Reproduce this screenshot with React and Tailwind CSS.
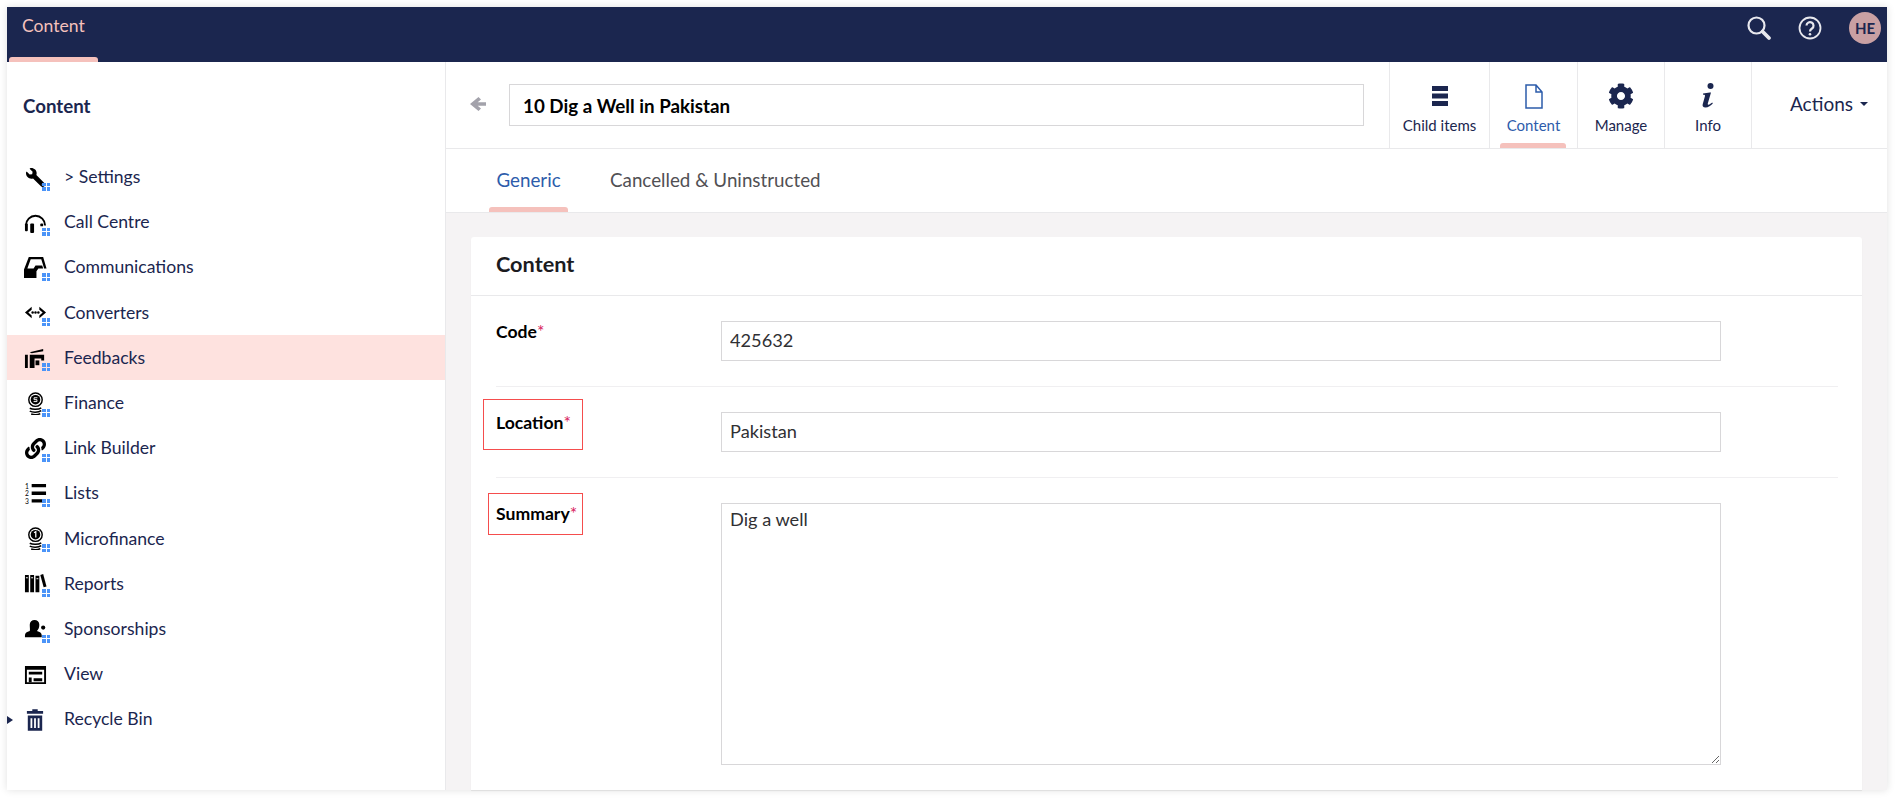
import React from "react";
import { FaCog, FaLink, FaWrench } from "react-icons/fa";

const I = ({ children, vb = "0 0 24 24", cls = "w-[23px] h-[23px]" }) => (
  <svg viewBox={vb} className={cls} fill="currentColor">{children}</svg>
);

const coin = (
  <>
    <circle cx="12" cy="8" r="7" fill="none" stroke="currentColor" strokeWidth="1.500" />
    <circle cx="12" cy="8" r="5" />
    <path d="M6 17c3 1.500 9 1.500 12-.500M6 20c3 1.500 9 1.500 12-.500M7.500 23c3 .8 7 .8 9.500-.500" fill="none" stroke="currentColor" strokeWidth="1.600" />
  </>
);

const icons = {
  wrench: <FaWrench className="w-[19px] h-[19px] -scale-x-100" />,
  head: (
    <I>
      <path d="M2 15a10 10 0 0 1 20 0" fill="none" stroke="currentColor" strokeWidth="2" />
      <rect x="1" y="13" width="3" height="8" rx="1" />
      <rect x="6.500" y="13" width="4" height="10" rx="1" />
      <rect x="17" y="13" width="3" height="3" rx="1" />
    </I>
  ),
  comm: (
    <I>
      <path fillRule="evenodd" d="M5 1h15l3.500 12h-2.500L18 3.500H7L3.500 13H10l2-3h7l1 3h-5l-2 3v7H0v-9z" />
    </I>
  ),
  conv: (
    <I>
      <path d="M8 6 1 12l7 6v-3L4.500 12 8 9zM16 6l7 6-7 6v-3l3.500-3L16 9z" />
      <circle cx="9" cy="12" r="1.300" />
      <circle cx="12" cy="12" r="1.300" />
      <circle cx="15" cy="12" r="1.300" />
    </I>
  ),
  feed: (
    <I>
      <path d="M1 8h3v14H1zM6 8h15v6h-3v-2h-7v10H6z" />
      <path d="M6 5.500 20 2v2.500L8 6.500z" />
      <rect x="12" y="14" width="4" height="5" />
    </I>
  ),
  fin: (
    <I>
      {coin}
      <path d="M14 6h-3.500v2h3v2H10" fill="none" stroke="#fff" strokeWidth="1" />
    </I>
  ),
  micro: (
    <I>
      {coin}
      <path d="M10.500 6l1.800-1.200V11" fill="none" stroke="#fff" strokeWidth="1.300" />
    </I>
  ),
  link: <FaLink className="w-[21px] h-[21px]" />,
  lists: (
    <svg viewBox="0 0 24 24" className="w-[23px] h-[23px]" fill="currentColor">
      <path d="M8 2h15v3.500H8zM8 10h15v3.500H8zM8 18h15l-3 3.500H8z" />
      <text x="1" y="7" fontSize="7" fontFamily="Lato">1</text>
      <text x="1" y="15" fontSize="7" fontFamily="Lato">2</text>
      <text x="1" y="23" fontSize="7" fontFamily="Lato">3</text>
    </svg>
  ),
  rep: (
    <I>
      <path d="M1 3h4v18H1zM6.500 3h4v18h-4zM12 4h4v17h-4z" />
      <path d="M17 3l3-1 3.500 13-3 1z" />
      <path d="M2 6h2M7.500 6h2M13 7h2" stroke="#fff" strokeWidth="1" />
    </I>
  ),
  spons: (
    <I>
      <path d="M6 7a5 5 0 0 1 10 0c0 3-1 5-2.500 6.500 3 .8 5 2 5 4.500v2H1v-2c0-2.500 2-3.700 5-4.500C6.500 12 6 10 6 7z" />
      <circle cx="20" cy="10" r="2.200" />
    </I>
  ),
  view: (
    <I>
      <path fillRule="evenodd" d="M1 3h22v19H1zM3 7v13h18V7z" />
      <path d="M5 9h14v3H5zM5 15h3v5H5zM10 16h9v3H10z" />
    </I>
  ),
  trash: (
    <svg viewBox="0 0 20 24" className="w-[18px] h-[22px] text-[#1b264f]" fill="currentColor">
      <path d="M7 0h6v2h6v3H1V2h6z" />
      <path fillRule="evenodd" d="M2 7h16v17H2zM5 10v11h2V10zM9 10v11h2V10zM13 10v11h2V10z" />
    </svg>
  ),
};

const items = [
  ["> Settings", "wrench", true],
  ["Call Centre", "head", true],
  ["Communications", "comm", true],
  ["Converters", "conv", true],
  ["Feedbacks", "feed", true, true],
  ["Finance", "fin", true],
  ["Link Builder", "link", true],
  ["Lists", "lists", true],
  ["Microfinance", "micro", true],
  ["Reports", "rep", true],
  ["Sponsorships", "spons", true],
  ["View", "view", false],
  ["Recycle Bin", "trash", false],
];

const Dots = () => (
  <span className="absolute left-[35px] top-[28px] grid grid-cols-[3.500px_3.500px] gap-px">
    <i className="h-[3.500px] bg-[#4b94f8]" />
    <i className="h-[3.500px] bg-[#4b94f8]" />
    <i className="h-[3.500px] bg-[#4b94f8]" />
    <i className="h-[3.500px] bg-[#4b94f8]" />
  </span>
);

const Row = ({ label, icon, dots, active, last }) => (
  <div className={`relative flex items-center h-[45.2px] pl-[16px] text-[17.6px] text-[#1b264f] ${active ? "bg-[#fee2df] shadow-[inset_0_-1px_0_#fff]" : ""}`}>
    <span className="w-[24px] h-[24px] flex items-center justify-center text-black">{icons[icon]}</span>
    {dots && <Dots />}
    {last && <span className="absolute left-0 top-[19px] w-0 h-0 border-y-[4px] border-y-transparent border-l-[6px] border-l-[#1b264f]" />}
    <span className="ml-[17px]">{label}</span>
  </div>
);

const TopTab = ({ icon, label, active, w }) => (
  <div className={`relative shrink-0 flex flex-col items-center border-l border-[#e9e9eb] h-full ${w} ${active ? "text-[#2d5cab]" : "text-[#1b264f]"}`}>
    <span className="h-[28px] mt-[20px] flex items-center justify-center">{icon}</span>
    <span className="text-[15px] leading-[20px] mt-[5px]">{label}</span>
    {active && <span className="absolute left-[10px] bottom-0 w-[66px] h-[5px] rounded-t-[3px] bg-[#f5c1bc]" />}
  </div>
);

const Field = ({ label, children, border, box }) => (
  <div className={`relative flex ${border ? "border-b border-[#f0eff1]" : ""}`}>
    <div className="w-[225px] shrink-0 -mt-[1px] text-[17.6px] leading-[24px] font-bold text-black">
      {label}<span className="text-[#d9265f] font-normal">*</span>
    </div>
    {children}
    {box}
  </div>
);

const inputCls = "block w-[1000px] h-[40px] border border-[#d8d7d9] px-[8px] pb-[3px] text-[18.2px] text-[#303033] outline-none";

export default function App() {
  return (
    <div className="w-[1895px] h-[799px] overflow-hidden bg-white p-[7px] pb-[9px] font-['Lato','Liberation_Sans',sans-serif]">
      <div className="relative w-[1880px] h-[783px] flex flex-col bg-[#f5f3f4] shadow-[0_0_8px_rgba(0,0,0,0.12)]">
        <header className="relative h-[55px] shrink-0 bg-[#1b264f] flex items-start justify-between">
          <span className="ml-[15px] mt-[7px] text-[17.6px] leading-[24px] text-[#f5c1bc]">Content</span>
          <span className="absolute left-[2px] bottom-0 w-[89px] h-[5px] rounded-t-[3px] bg-[#f5c1bc]" />
          <div className="flex items-center h-[42px]">
            <svg viewBox="0 0 26 26" className="w-[26px] h-[26px] text-[#e8e8ee]" fill="none" stroke="currentColor">
              <circle cx="10.500" cy="10.500" r="8" strokeWidth="2.200" />
              <path d="M16.500 16.500 23 23" strokeWidth="3.800" strokeLinecap="round" />
            </svg>
            <svg viewBox="0 0 24 24" className="w-[24px] h-[24px] ml-[26px] text-[#e8e8ee]" fill="none" stroke="currentColor" strokeWidth="1.800">
              <circle cx="12" cy="12" r="10.500" />
              <path d="M8.500 9.500a3.500 3.500 0 1 1 5.500 3c-1.300.9-2 1.500-2 3" strokeWidth="2.200" />
              <circle cx="12" cy="18.200" r="1.300" fill="currentColor" stroke="none" />
            </svg>
            <span className="ml-[27px] mr-[6px] w-[32px] h-[32px] rounded-full bg-[#c9a0a3] text-[#1b264f] text-[15px] font-bold flex items-center justify-center">HE</span>
          </div>
        </header>
        <div className="flex flex-1 min-h-0">
          <aside className="w-[439px] shrink-0 bg-white border-r border-[#e9e9eb]">
            <div className="h-[92.700px] pl-[16px] pt-[30px] text-[18.7px] leading-[28px] font-bold text-[#1b264f]">Content</div>
            {items.map(([l, ic, d, a], i) => (
              <Row key={l} label={l} icon={ic} dots={d} active={a} last={i === items.length - 1} />
            ))}
          </aside>
          <main className="flex-1 min-w-0 flex flex-col">
            <div className="h-[87px] shrink-0 flex bg-white border-b border-[#e9e9eb]">
              <div className="w-[63px] shrink-0 flex items-center justify-center pb-[2px] text-[#a3a2ab]">
                <svg viewBox="0 0 16 16" className="w-[16px] h-[16px]" fill="currentColor">
                  <path d="M8.500 1 11 3.400 7.700 6.200H16v3.600H7.700L11 12.600 8.500 15 0 8z" />
                </svg>
              </div>
              <input readOnly defaultValue="10 Dig a Well in Pakistan" className="mt-[22px] w-[855px] h-[42px] shrink-0 border border-[#d8d7d9] px-[13px] text-[18.8px] font-bold text-black outline-none" />
              <div className="ml-[25px] flex h-full">
                <TopTab w="w-[100px]" label="Child items" icon={
                  <svg viewBox="0 0 16 20" className="w-[16px] h-[20px]" fill="currentColor"><rect y="0" width="16" height="5" /><rect y="7.500" width="16" height="5" /><rect y="15" width="16" height="5" /></svg>
                } />
                <TopTab w="w-[88px]" active label="Content" icon={
                  <svg viewBox="0 0 18 25" className="w-[18px] h-[25px]" fill="none" stroke="currentColor" strokeWidth="1.500"><path d="M1 1h10l6 7v16H1zM11 1v7h6" /></svg>
                } />
                <TopTab w="w-[87px]" label="Manage" icon={<FaCog className="w-[26px] h-[26px]" />} />
                <TopTab w="w-[87px]" label="Info" icon={
                  <svg viewBox="0 0 14 26" className="w-[14px] h-[26px]" fill="currentColor">
                    <circle cx="9.500" cy="3" r="3" />
                    <path d="M2 10.500 8.800 9.500h1.200L6.800 20.500c-.3 1.200.5 1.500 1.500.9l3-1.900.5.900c-2 2-4.500 4.100-7.300 4.100-2.500 0-3.300-1.500-2.800-3.300l2.300-8.200c.2-1-.2-1.300-1.900-1.300z" />
                  </svg>
                } />
                <div className="relative shrink-0 w-[136px] border-l border-[#e9e9eb] flex items-center pl-[38px] pb-[2px] text-[19px] text-[#1b264f]">
                  Actions
                  <span className="ml-[7px] w-0 h-0 border-x-[4.500px] border-x-transparent border-t-[4.500px] border-t-[#1b264f]" />
                </div>
              </div>
            </div>
            <div className="h-[64px] shrink-0 flex bg-white border-b border-[#e9e9eb] px-[43px] text-[18.8px]">
              <div className="relative w-[79px] flex items-center justify-center text-[#2d5cab]">
                Generic
                <span className="absolute left-0 bottom-0 w-[79px] h-[5px] rounded-t-[3px] bg-[#f5c1bc]" />
              </div>
              <div className="ml-[42px] flex items-center text-[#515054]">Cancelled &amp; Uninstructed</div>
            </div>
            <div className="flex-1 min-h-0 pt-[24px] pl-[25px] pr-[25px]">
              <section className="h-full bg-white rounded-t-[3px] shadow-[0_1px_1px_rgba(0,0,0,0.08)]">
                <div className="h-[59px] border-b border-[#e9e9eb] pl-[25px] pb-[3px] flex items-center text-[21.7px] font-bold text-[#1b1b1f]">Content</div>
                <div className="pl-[25px] pr-[24px]">
                  <div className="pt-[25px]">
                    <Field label="Code" border>
                      <div className="pb-[25px]"><input readOnly defaultValue="425632" className={inputCls} /></div>
                    </Field>
                  </div>
                  <div className="pt-[25px]">
                    <Field label="Location" border box={
                      <span className="absolute left-[-13px] top-[-13px] w-[100px] h-[51px] border border-[#f54d4d] pointer-events-none" />
                    }>
                      <div className="pb-[25px]"><input readOnly defaultValue="Pakistan" className={inputCls} /></div>
                    </Field>
                  </div>
                  <div className="pt-[25px]">
                    <Field label="Summary" box={
                      <span className="absolute left-[-8px] top-[-10px] w-[95px] h-[42px] border border-[#f54d4d] pointer-events-none" />
                    }>
                      <textarea readOnly defaultValue="Dig a well" className="block w-[1000px] h-[262px] border border-[#d8d7d9] px-[8px] py-[2px] text-[18.2px] text-[#303033] outline-none resize" />
                    </Field>
                  </div>
                </div>
              </section>
            </div>
          </main>
        </div>
      </div>
    </div>
  );
}
